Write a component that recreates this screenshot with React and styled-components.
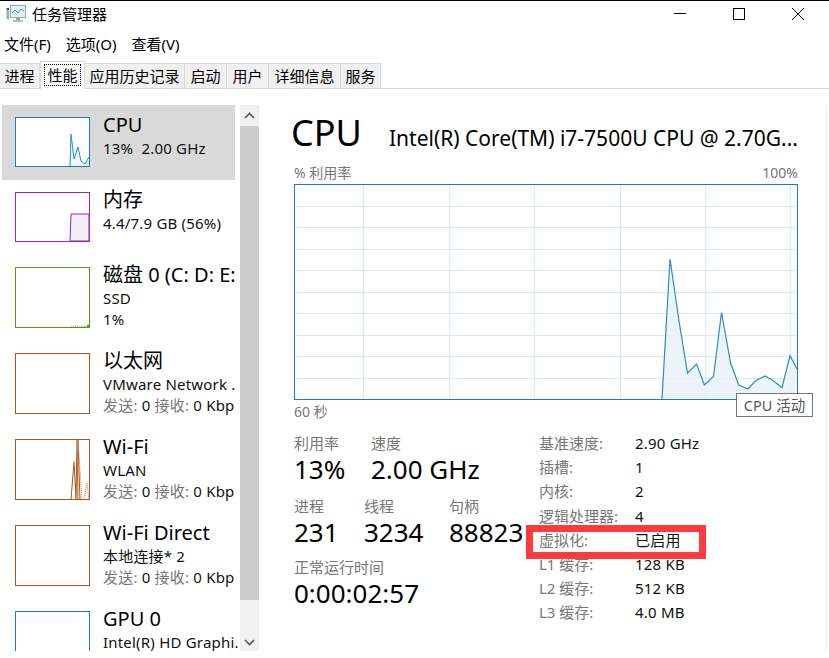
import styled, { createGlobalStyle } from 'styled-components'

const GlobalStyle = createGlobalStyle`
  html, body {
    margin: 0;
    background: #fff;
    overflow: hidden;
  }
  body {
    font-family: "Noto Sans", "Noto Sans CJK SC", sans-serif;
    color: #000;
  }
`

const Window = styled.div`
  width: 829px;
  height: 658px;
  box-sizing: border-box;
  border-top: 1px solid #000;
  position: relative;
  overflow: hidden;
`

const TitleBar = styled.div`
  display: flex;
  align-items: center;
  height: 25px;
  padding-left: 6px;
  padding-right: 2px;
  font-size: 15px;
`

const TitleText = styled.span`
  margin-left: 6px;
  flex: 1;
`

const WinButton = styled.div`
  width: 59px;
  height: 25px;
  display: flex;
  align-items: center;
  justify-content: center;
`

const Menu = styled.div`
  display: flex;
  height: 34px;
  align-items: center;
  padding-left: 4px;
  gap: 15px;
  font-size: 15px;
`

const Tabs = styled.div`
  display: flex;
  align-items: flex-end;
  height: 28px;
  border-bottom: 1px solid #d9d9d9;
`

const Tab = styled.div`
  width: ${(p) => p.$w}px;
  box-sizing: border-box;
  height: ${(p) => (p.$active ? 28 : 25)}px;
  margin-bottom: ${(p) => (p.$active ? -1 : 0)}px;
  padding-bottom: 2px;
  display: flex;
  align-items: center;
  justify-content: center;
  font-size: 15px;
  background: ${(p) => (p.$active ? '#fff' : '#f0f0f0')};
  border: 1px solid #d9d9d9;
  border-left-width: ${(p) => (p.$active ? 1 : 0)}px;
  border-bottom: 0;
`

const FocusLabel = styled.span`
  outline: 1px dotted #000;
  padding: 0 2px;
  line-height: 20px;
`

const Body = styled.div`
  display: flex;
  width: 827px;
  box-sizing: border-box;
  height: 546px;
  margin-top: 16px;
  overflow: hidden;
  border-right: 1px solid #eeeeee;
`

const Side = styled.div`
  width: 260px;
  flex: none;
  display: flex;
`

const List = styled.div`
  width: 240px;
  overflow: hidden;
  padding-left: 2px;
  box-sizing: border-box;
`

const Item = styled.div`
  display: flex;
  width: 233px;
  height: ${(p) => p.$h}px;
  box-sizing: border-box;
  padding: 12px 0 0 13px;
  gap: 13px;
  background: ${(p) => (p.$selected ? '#d9d9d9' : 'transparent')};
`

const Thumb = styled.div`
  width: 75px;
  height: ${(p) => p.$h}px;
  flex: none;
  box-sizing: border-box;
  border: 1px solid ${(p) => p.$color};
  background: #fff;
`

const ThumbSvg = styled.svg`
  display: block;
  width: 73px;
  height: 100%;
`

const ItemText = styled.div`
  margin-top: -5px;
  white-space: nowrap;
`

const ItemName = styled.div`
  font-size: 20px;
  line-height: 26px;
`

const ItemLine = styled.div`
  font-size: 15px;
  letter-spacing: 0.2px;
  line-height: 21px;
  color: #111;
`

const Dim = styled.span`
  color: #777;
`

const Scrollbar = styled.div`
  width: 19px;
  display: flex;
  flex-direction: column;
  background: #f0f0f0;
`

const ScrollArrow = styled.div`
  height: 21px;
  display: flex;
  align-items: center;
  justify-content: center;
`

const ScrollThumb = styled.div`
  height: 474px;
  background: #cdcdcd;
`

const ScrollRest = styled.div`
  flex: 1;
  display: flex;
  align-items: flex-end;
  justify-content: center;
  padding-bottom: 5px;
`

const Main = styled.div`
  flex: 1;
  padding: 0 0 0 31px;
  min-width: 0;
`

const Heading = styled.div`
  display: flex;
  align-items: baseline;
  height: 56px;
  line-height: 56px;
`

const HeadingName = styled.div`
  font-size: 36px;
  width: 98px;
  flex: none;
`

const HeadingModel = styled.div`
  font-size: 21px;
  white-space: nowrap;
`

const ChartBlock = styled.div`
  margin-left: 3px;
  width: 504px;
`

const AxisRow = styled.div`
  display: flex;
  justify-content: space-between;
  font-size: 14px;
  color: #777;
  height: ${(p) => p.$h}px;
  line-height: ${(p) => p.$h}px;
`

const Chart = styled.svg`
  display: block;
  width: 504px;
  height: 216px;
`

const Stats = styled.div`
  display: flex;
  margin-left: 3px;
  margin-top: 9px;
`

const LeftStats = styled.div`
  width: 245px;
  flex: none;
`

const StatRow = styled.div`
  display: flex;
  height: ${(p) => p.$h}px;
`

const Stat = styled.div`
  width: ${(p) => p.$w}px;
  flex: none;
  white-space: nowrap;
`

const StatLabel = styled.div`
  font-size: 15px;
  line-height: 20px;
  color: #777;
`

const StatValue = styled.div`
  font-size: 26px;
  line-height: 33px;
`

const Specs = styled.div`
  display: grid;
  grid-template-columns: 96px auto;
  grid-auto-rows: 24.2px;
  align-items: center;
  margin-top: -2px;
  font-size: 15px;
  line-height: 20px;
  white-space: nowrap;
`

const SpecLabel = styled.div`
  color: #777;
`

const SpecValue = styled.div`
  color: #111;
  letter-spacing: 0.2px;
`

const Highlight = styled.div`
  position: absolute;
  left: 526px;
  top: 524px;
  width: 180px;
  height: 34px;
  box-sizing: border-box;
  border: 7px solid #ff3b3b;
`

const Tooltip = styled.div`
  position: absolute;
  left: 736px;
  top: 392px;
  width: 77px;
  height: 24px;
  box-sizing: border-box;
  border: 1px solid #767676;
  background: #fff;
  color: #575757;
  font-size: 14.5px;
  line-height: 22px;
  text-align: center;
`

const tabs = [
  ['进程', 40],
  ['性能', 45, true],
  ['应用历史记录', 100],
  ['启动', 42],
  ['用户', 42],
  ['详细信息', 72],
  ['服务', 40],
]

const cpuPoints = [
  [368, 215], [376, 75], [385, 137], [393.5, 189], [402.6, 180], [410.4, 201], [419.5, 192.5],
  [427.5, 128.5], [436.6, 179], [444.7, 201], [453.8, 205], [462, 196.5], [471, 192], [479.7, 197],
  [488, 203.6], [496, 171.6], [504, 186.7],
]

const toPoints = (list) => list.map((p) => p.join(',')).join(' ')

const CpuThumb = () => (
  <ThumbSvg viewBox="0 0 73 48" preserveAspectRatio="none">
    <polygon fill="#f1f6fa" points="54,48 55,16 58,41 62,29 65,43 69,46 73,39 73,48" />
    <polyline fill="none" stroke="#2a8cc4" strokeWidth="1" points="54,48 55,16 58,41 62,29 65,43 69,46 73,39" />
  </ThumbSvg>
)

const MemThumb = () => (
  <ThumbSvg viewBox="0 0 73 48" preserveAspectRatio="none">
    <polygon fill="#f1edf5" stroke="#9528b4" strokeWidth="1" points="54,48 55,21 73,21 73,48" />
  </ThumbSvg>
)

const DiskThumb = () => (
  <ThumbSvg viewBox="0 0 73 58" preserveAspectRatio="none">
    <polyline fill="none" stroke="#6aa92c" strokeWidth="1" strokeDasharray="1 1" points="55,58 60,57 64,58 68,57 70,58" />
    <polyline fill="none" stroke="#4ea017" strokeWidth="2" points="71,58 73,56" />
  </ThumbSvg>
)

const WifiThumb = () => (
  <ThumbSvg viewBox="0 0 73 58" preserveAspectRatio="none">
    <polyline fill="none" stroke="#a7581c" strokeWidth="1" points="55,59 58,21 60,59 61,0 62,59" />
    <polyline fill="none" stroke="#a7581c" strokeWidth="1" points="62,0 64,59" />
    <polyline fill="none" stroke="#d8793a" strokeWidth="1" strokeDasharray="1 1" points="60,59 62,0 66,59" />
    <polyline fill="none" stroke="#d8793a" strokeWidth="1" strokeDasharray="1 1" points="68,59 71,42 73,59" />
  </ThumbSvg>
)

const NetLine = () => (
  <ItemLine><Dim>发送:</Dim> 0 <Dim>接收:</Dim> 0 Kbp</ItemLine>
)

const items = [
  { name: 'CPU', lines: ['13%\u00a0\u00a02.00 GHz'], color: '#1a7fba', h: 75, thumbH: 50, selected: true, chart: <CpuThumb /> },
  { name: '内存', lines: ['4.4/7.9 GB (56%)'], color: '#9528b4', h: 75, thumbH: 50, chart: <MemThumb /> },
  { name: '磁盘 0 (C: D: E:', lines: ['SSD', '1%'], color: '#4ea017', h: 86, thumbH: 61, chart: <DiskThumb /> },
  { name: '以太网', lines: ['VMware Network .'], net: true, color: '#a7581c', h: 86, thumbH: 61 },
  { name: 'Wi-Fi', lines: ['WLAN'], net: true, color: '#a7581c', h: 86, thumbH: 61, chart: <WifiThumb /> },
  { name: 'Wi-Fi Direct', lines: ['本地连接* 2'], net: true, color: '#a7581c', h: 86, thumbH: 61 },
  { name: 'GPU 0', lines: ['Intel(R) HD Graphi.'], color: '#1a7fba', h: 86, thumbH: 61 },
]

const specs = [
  ['基准速度:', '2.90 GHz'],
  ['插槽:', '1'],
  ['内核:', '2'],
  ['逻辑处理器:', '4'],
  ['虚拟化:', '已启用'],
  ['L1 缓存:', '128 KB'],
  ['L2 缓存:', '512 KB'],
  ['L3 缓存:', '4.0 MB'],
]

const AppIcon = () => (
  <svg width="20" height="18" viewBox="0 0 20 18">
    <rect x="0.5" y="5" width="2.5" height="9" fill="#6fc49a" />
    <rect x="0.5" y="3" width="2.5" height="2" fill="#555" />
    <rect x="4.5" y="0.5" width="15" height="12" fill="#e4f0f9" stroke="#9aa4ab" />
    <polyline points="6,8 9,5 12,8 15,4 18,6" fill="none" stroke="#3d9be0" strokeWidth="1" />
    <rect x="10" y="13" width="4" height="2" fill="#9aa3aa" />
    <rect x="7" y="15" width="10" height="2" fill="#b5bcc2" />
  </svg>
)

const SpecRow = ({ label, value }) => (<>
  <SpecLabel>{label}</SpecLabel>
  <SpecValue>{value}</SpecValue>
</>)

const App = () => {
  return (<>
    <GlobalStyle />
    <Window>
      <TitleBar>
        <AppIcon />
        <TitleText>任务管理器</TitleText>
        <WinButton>
          <svg width="12" height="12" viewBox="0 0 12 12"><path d="M0 5.5h12" stroke="#000" /></svg>
        </WinButton>
        <WinButton>
          <svg width="12" height="12" viewBox="0 0 12 12"><rect x="0.5" y="0.5" width="11" height="11" fill="none" stroke="#000" /></svg>
        </WinButton>
        <WinButton>
          <svg width="12" height="12" viewBox="0 0 12 12"><path d="M0 0l12 12M12 0L0 12" stroke="#000" /></svg>
        </WinButton>
      </TitleBar>
      <Menu>
        <span>文件(F)</span>
        <span>选项(O)</span>
        <span>查看(V)</span>
      </Menu>
      <Tabs>
        {tabs.map(([label, w, active]) => (
          <Tab key={label} $w={w} $active={active}>
            {active ? <FocusLabel>{label}</FocusLabel> : label}
          </Tab>
        ))}
      </Tabs>
      <Body>
        <Side>
          <List>
            {items.map((item) => (
              <Item key={item.name} $h={item.h} $selected={item.selected}>
                <Thumb $h={item.thumbH} $color={item.color}>{item.chart}</Thumb>
                <ItemText>
                  <ItemName>{item.name}</ItemName>
                  {item.lines.map((line) => <ItemLine key={line}>{line}</ItemLine>)}
                  {item.net && <NetLine />}
                </ItemText>
              </Item>
            ))}
          </List>
          <Scrollbar>
            <ScrollArrow>
              <svg width="11" height="7" viewBox="0 0 11 7"><path d="M1 6l4.5-4.5L10 6" fill="none" stroke="#555" strokeWidth="1.6" /></svg>
            </ScrollArrow>
            <ScrollThumb />
            <ScrollRest>
              <svg width="11" height="7" viewBox="0 0 11 7"><path d="M1 1l4.5 4.5L10 1" fill="none" stroke="#555" strokeWidth="1.6" /></svg>
            </ScrollRest>
          </Scrollbar>
        </Side>
        <Main>
          <Heading>
            <HeadingName>CPU</HeadingName>
            <HeadingModel>Intel(R) Core(TM) i7-7500U CPU @ 2.70G...</HeadingModel>
          </Heading>
          <ChartBlock>
            <AxisRow $h={23}><span>% 利用率</span><span>100%</span></AxisRow>
            <Chart viewBox="0 0 504 216">
              {[1, 2, 3, 4, 5, 6, 7, 8, 9].map((i) => (
                <path key={i} d={`M0 ${Math.round(i * 21.5) + 0.5}H504`} stroke="#d9e8f3" />
              ))}
              {[1, 2, 3, 4, 5, 6].map((i) => (
                <path key={i} d={`M${Math.round(i * 85.4 - 16) + 0.5} 0V216`} stroke="#d9e8f3" />
              ))}
              <polygon points={`${toPoints(cpuPoints)} 504,215`} fill="#e9f1f8" fillOpacity="0.8" />
              <polyline points={toPoints(cpuPoints)} fill="none" stroke="#2a8cc4" strokeWidth="1.2" />
              <rect x="0.5" y="0.5" width="503" height="215" fill="none" stroke="#1a7fba" />
            </Chart>
            <AxisRow $h={24}><span>60 秒</span><span>0</span></AxisRow>
          </ChartBlock>
          <Stats>
            <LeftStats>
              <StatRow $h={63}>
                <Stat $w={77}><StatLabel>利用率</StatLabel><StatValue>13%</StatValue></Stat>
                <Stat $w={120}><StatLabel>速度</StatLabel><StatValue>2.00 GHz</StatValue></Stat>
              </StatRow>
              <StatRow $h={61}>
                <Stat $w={70}><StatLabel>进程</StatLabel><StatValue>231</StatValue></Stat>
                <Stat $w={85}><StatLabel>线程</StatLabel><StatValue>3234</StatValue></Stat>
                <Stat $w={85}><StatLabel>句柄</StatLabel><StatValue>88823</StatValue></Stat>
              </StatRow>
              <StatRow $h={60}>
                <Stat $w={200}><StatLabel>正常运行时间</StatLabel><StatValue>0:00:02:57</StatValue></Stat>
              </StatRow>
            </LeftStats>
            <Specs>
              {specs.map(([label, value]) => (
                <SpecRow key={label} label={label} value={value} />
              ))}
            </Specs>
          </Stats>
        </Main>
      </Body>
      <Highlight />
      <Tooltip>CPU 活动</Tooltip>
    </Window>
  </>)
}

export default App
